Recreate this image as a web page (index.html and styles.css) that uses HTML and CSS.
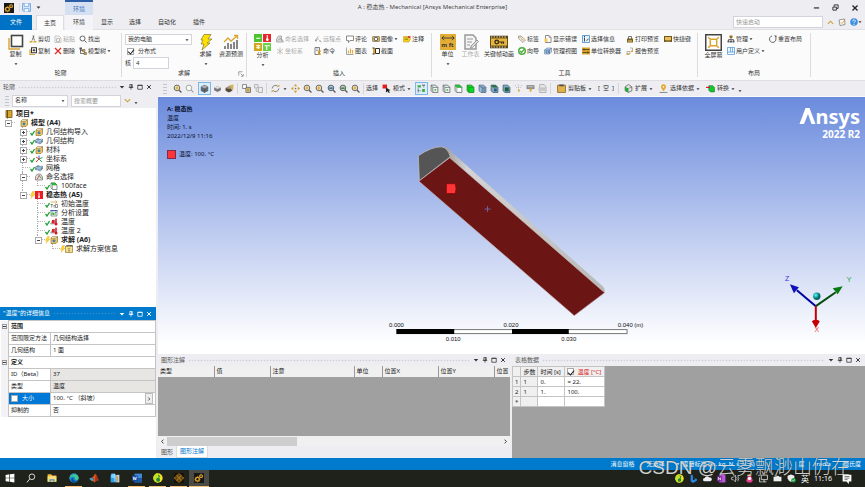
FILE: index.html
```html
<!DOCTYPE html>
<html lang="zh-CN">
<head>
<meta charset="utf-8">
<title>A : 稳态热 - Mechanical</title>
<link rel="stylesheet" href="styles.css">
</head>
<body>
<svg class="defs" aria-hidden="true">
  <symbol id="gears" viewBox="0 0 16 16"><rect width="16" height="16" fill="#171717"/><circle cx="5.5" cy="10" r="3" fill="none" stroke="#e9a72a" stroke-width="2"/><circle cx="11.3" cy="5" r="2.2" fill="none" stroke="#e9a72a" stroke-width="1.8"/><path d="M5.500 5v10M.5 10h10M2 6.500l7 7M2 13.500l7-7M11.300 1v8M7.500 5h8" stroke="#e9a72a" stroke-width="1" stroke-dasharray="1.500 7 1.500"/></symbol>
  <symbol id="save" viewBox="0 0 16 16"><path d="M1 1h14v14H3l-2-2z" fill="#d5e6fa" stroke="#6ba2e6" stroke-width="1.600"/><path d="M4 1v5h8V1M4 15v-5h8v5" fill="#fff" stroke="#6ba2e6" stroke-width="1.400"/></symbol>
  <symbol id="copybig" viewBox="0 0 16 16"><path d="M1 4v11h11" fill="none" stroke="#d9a432" stroke-width="1.400"/><rect x="3.500" y="1.500" width="11" height="11" fill="#fff" stroke="#444" stroke-width="1.600"/></symbol>
  <symbol id="cut" viewBox="0 0 16 16"><path d="M8 1l3 10M10 1L6 11" stroke="#555" stroke-width="1.500"/><path d="M1 12h6v3H1zM9 12h6v3H9z" fill="#d9a432"/></symbol>
  <symbol id="copy" viewBox="0 0 16 16"><path d="M2 5v10h10" fill="none" stroke="#d9a432" stroke-width="2.500"/><rect x="5" y="1.500" width="10" height="10" fill="#fff" stroke="#333" stroke-width="2"/><path d="M7 6.500h6M10 4v5" stroke="#333" stroke-width="2"/></symbol>
  <symbol id="paste" viewBox="0 0 16 16"><path d="M2 2h8l4 4v9H2z" fill="#f7f7f7" stroke="#bbb" stroke-width="1.500"/><path d="M5 7h6v6H5z" fill="none" stroke="#aaa" stroke-width="1.500"/></symbol>
  <symbol id="del" viewBox="0 0 16 16"><path d="M2 2l12 12M14 2L2 14" stroke="#e02b2b" stroke-width="2.500"/></symbol>
  <symbol id="find" viewBox="0 0 16 16"><circle cx="7" cy="7" r="5" fill="none" stroke="#555" stroke-width="1.800"/><path d="M11 11l4 4" stroke="#555" stroke-width="2"/></symbol>
  <symbol id="treeico" viewBox="0 0 16 16"><path d="M3 3v10h8M3 7h5" fill="none" stroke="#444" stroke-width="1.500"/><path d="M1 1h5v4H1z" fill="#555"/><path d="M7 5h5v4H7zM10 11h5v4h-5z" fill="#d9a432" stroke="#444"/></symbol>
  <symbol id="bolt" viewBox="0 0 16 16"><path d="M6 .5h7L10 5h4l-5 4h3l-8 7 2-6H3l2-4H3z" fill="#ffe000" stroke="#8f8630" stroke-width=".8"/></symbol>
  <symbol id="forecast" viewBox="0 0 16 16"><path d="M2 15v-3M5 15V9M8 15v-5M11 15V8M14 15V6" stroke="#555" stroke-width="1.400"/><path d="M1 8l4-4 3 3 6-5M11 1.500h3.500V5" fill="none" stroke="#d9a432" stroke-width="1.300"/></symbol>
  <symbol id="analysis" viewBox="0 0 16 16"><path d="M0 0h7.500v7.500H0z" fill="#4cc431"/><path d="M8.500 0H16v7.500H8.500z" fill="#e9232b"/><path d="M0 8.500h7.500V16H0z" fill="#d2a417"/><path d="M8.500 8.500H16V16H8.500z" fill="#6ad043"/><path d="M2 4h4M4 10v4M2 13h4M2 11h4M10 11h5M12 11v4M12.500 1v4" stroke="#fff" stroke-width="1"/><circle cx="12.500" cy="5.300" r="1.300" fill="#fff"/></symbol>
  <symbol id="named" viewBox="0 0 16 16"><path d="M1 14V8l4-6h6v5l4 7z" fill="#ddd" stroke="#999" stroke-width="1.500"/><path d="M4 11l5-5 3 6" fill="none" stroke="#888" stroke-width="1.500"/></symbol>
  <symbol id="axesgray" viewBox="0 0 16 16"><path d="M8 1v14M2 4l12 9M14 4L2 13" stroke="#b5b5b5" stroke-width="1.600"/></symbol>
  <symbol id="remote" viewBox="0 0 16 16"><path d="M2 12L9 2M4 8h6M11 11l4 4" stroke="#aaa" stroke-width="1.600"/><circle cx="4" cy="11" r="2" fill="#999"/><circle cx="12" cy="12" r="1.500" fill="#999"/></symbol>
  <symbol id="cmd" viewBox="0 0 16 16"><path d="M2 1h9v14H2z" fill="#fff" stroke="#555" stroke-width="1.500"/><path d="M4 4h5M4 7h4" stroke="#555"/><path d="M14 8H9v6h5" fill="none" stroke="#d9a432" stroke-width="2.500"/></symbol>
  <symbol id="comment" viewBox="0 0 16 16"><path d="M1 2h14v9H8l-3 4v-4H1z" fill="#fff" stroke="#666" stroke-width="1.500"/></symbol>
  <symbol id="chart" viewBox="0 0 16 16"><path d="M1 1v14h14" fill="none" stroke="#888" stroke-width="1.500"/><path d="M5 13V7M9 13V3M13 13V6" stroke="#e0ae3d" stroke-width="2.200"/></symbol>
  <symbol id="camera" viewBox="0 0 16 16"><rect x="1" y="3" width="14" height="10" rx="1" fill="#dab65b" stroke="#555"/><circle cx="8" cy="8" r="3.500" fill="#fff" stroke="#444" stroke-width="1.600"/></symbol>
  <symbol id="section" viewBox="0 0 16 16"><path d="M2 2h5v12H2z" fill="#d9a432"/><path d="M7 3h8v10H7z" fill="#fff" stroke="#333" stroke-width="2"/><path d="M1 2h4M1 14h4" stroke="#333" stroke-width="2"/></symbol>
  <symbol id="note" viewBox="0 0 16 16"><path d="M1 3h11l3 5-3 6H1z" fill="#f4cf1d" stroke="#b68e15"/><path d="M3 6h7M3 9h7" stroke="#8a6a10" stroke-width="1.200"/><path d="M10 2h5v4h-5z" fill="#d44"/></symbol>
  <symbol id="sheet" viewBox="0 0 16 16"><path d="M2 1h8l3 3v11H2z" fill="#f5f5f5" stroke="#999" stroke-width="1.500"/><path d="M4 5h6M4 8h5M4 11h3" stroke="#999"/><path d="M8 12l6-6 1.500 1.500-6 6-2 .5z" fill="#ddd" stroke="#888" stroke-width=".8"/></symbol>
  <symbol id="film" viewBox="0 0 20 14"><path d="M0 0h20v14H0z" fill="#55451a"/><path d="M1 3h18v8H1z" fill="#e7b440"/><path d="M1 1.500h18M1 12.500h18" stroke="#f8e3ad" stroke-width="1.200" stroke-dasharray="1.500 1.500"/><circle cx="7.500" cy="7" r="2" fill="none" stroke="#3c3111" stroke-width="1.500"/><path d="M9.500 7H15v2M13 7v2" fill="none" stroke="#3c3111" stroke-width="1.300"/></symbol>
  <symbol id="tag" viewBox="0 0 16 16"><path d="M1 2h5l9 8-5 5L1 7z" fill="#eee" stroke="#777" stroke-width="1.200"/><circle cx="4" cy="4.500" r="1.500" fill="#d9a432"/><path d="M6 7l5 4" stroke="#d9a432" stroke-width="2"/></symbol>
  <symbol id="ok" viewBox="0 0 16 16"><circle cx="8" cy="8" r="6.500" fill="#fff" stroke="#48ad3c" stroke-width="3"/><path d="M4 8l3 3 5-6" fill="none" stroke="#48ad3c" stroke-width="2.400"/></symbol>
  <symbol id="doc" viewBox="0 0 16 16"><path d="M3 1h7l4 4v10H3z" fill="#fff" stroke="#666" stroke-width="1.500"/><path d="M1 7h6v7H1z" fill="#f4ca5c"/><path d="M10 1v4h4" fill="none" stroke="#666"/></symbol>
  <symbol id="views" viewBox="0 0 16 16"><path d="M1 6l5-4h9v8l-4 4H1z" fill="#b8d2ed" stroke="#49739d"/><path d="M1 6h10v8M11 6l4-4M4 8h5v4H4z" fill="none" stroke="#355d85" stroke-width="1.200"/></symbol>
  <symbol id="info" viewBox="0 0 16 16"><path d="M1 1h14v14H1z" fill="#e5f2fd" stroke="#3684c6" stroke-width="1.500"/><path d="M5 5v8M5 2v2M9 11l4-3" stroke="#333" stroke-width="1.800"/></symbol>
  <symbol id="conv" viewBox="0 0 16 16"><path d="M0 1h16v14H0z" fill="#d9a432"/><path d="M1 5h14M1 11h14M4 3v4M12 9v4" stroke="#493b16" stroke-width="1.600"/></symbol>
  <symbol id="lock" viewBox="0 0 16 16"><path d="M5 8V3h6v5" fill="none" stroke="#555" stroke-width="1.600"/><path d="M2 7h12v8H2z" fill="#79601f"/><path d="M4 11h8v2H4z" fill="#f1d079"/></symbol>
  <symbol id="report" viewBox="0 0 16 16"><path d="M2 14V9h6v5zM8 2h5v6" fill="none" stroke="#999" stroke-width="1.500"/><path d="M1 13h5v3H1zM10 7h4v3h-4z" fill="#d9a432"/></symbol>
  <symbol id="keys" viewBox="0 0 16 16"><path d="M0 2h16v12H0z" fill="#6b5520"/><path d="M2 4h12v6H2z" fill="#e8bf5c"/><path d="M3 12h10" stroke="#e8bf5c" stroke-width="1.500"/></symbol>
  <symbol id="full" viewBox="0 0 16 16"><path d="M.7.700h14.600v14.600H.7z" fill="#fff" stroke="#444" stroke-width="1.400"/><path d="M5 5h6v6H5zM3 3l2.500 2.500M13 3l-2.500 2.500M3 13l2.500-2.500M13 13l-2.500-2.500" fill="none" stroke="#dba22d" stroke-width="1.400"/></symbol>
  <symbol id="manage" viewBox="0 0 16 16"><path d="M8 5v4M3 12V9h10v3" fill="none" stroke="#555" stroke-width="1.600"/><path d="M5 1h6v5H5z" fill="#947122"/><path d="M1 11h4v4H1zM6 11h4v4H6zM11 11h4v4h-4z" fill="#555"/></symbol>
  <symbol id="userdef" viewBox="0 0 16 16"><path d="M1 1h14v14H1zM7 1v9M1 10h14M11 1v9" fill="#eff7ff" stroke="#4793d8" stroke-width="1.400"/></symbol>
  <symbol id="reset" viewBox="0 0 16 16"><path d="M6 2a6.500 6.500 0 1 0 7 3" fill="none" stroke="#555" stroke-width="1.800"/><path d="M10 1h5v5z" fill="#555"/></symbol>
  <symbol id="launch" viewBox="0 0 16 16"><path d="M2 12V2h10M7 7l6 6M14 8v6H8" fill="none" stroke="#777" stroke-width="1.800"/></symbol>
  <symbol id="caret" viewBox="0 0 16 16"><path d="M2 5h12l-6 7z" fill="currentColor"/></symbol>
  <symbol id="arrow" viewBox="0 0 16 16"><path d="M5 2l6 6-6 6" fill="none" stroke="currentColor" stroke-width="3"/></symbol>
  <symbol id="pin" viewBox="0 0 16 16"><path d="M5 1h6v8H5zM2 9h12M8 9v6" fill="none" stroke="currentColor" stroke-width="2"/><path d="M9 1h2v8H9z" fill="currentColor"/></symbol>
  <symbol id="max" viewBox="0 0 16 16"><path d="M2 3h12v11H2zM2 4h12" fill="none" stroke="currentColor" stroke-width="2"/></symbol>
  <symbol id="close" viewBox="0 0 16 16"><path d="M3 3l10 10M13 3L3 13" stroke="currentColor" stroke-width="2.600"/></symbol>
  <symbol id="min" viewBox="0 0 16 16"><path d="M2 9h12" stroke="currentColor" stroke-width="2.600"/></symbol>
  <symbol id="restore" viewBox="0 0 16 16"><path d="M2 7h8v7H2zM5 6V2h9v8h-3" fill="none" stroke="currentColor" stroke-width="2"/></symbol>
  <symbol id="chev" viewBox="0 0 16 16"><path d="M2 5l6 6 6-6" fill="none" stroke="#cf9d35" stroke-width="2.600"/></symbol>
  <symbol id="chevup" viewBox="0 0 16 16"><path d="M2 11l6-6 6 6" fill="none" stroke="#cf9d35" stroke-width="2.400"/></symbol>
  <symbol id="edit" viewBox="0 0 16 16"><path d="M2 4l11-2 1 11-10 2z" fill="#fff" stroke="#777" stroke-width="1.500"/><path d="M5 8l3 3 6-8" fill="none" stroke="#d9a432" stroke-width="1.800"/></symbol>
  <symbol id="help" viewBox="0 0 16 16"><circle cx="8" cy="8" r="7.500" fill="#3e8ee0"/><path d="M5.500 6.500a2.500 2.500 0 1 1 3.500 2q-1 .5-1 2M8 12v1.800" fill="none" stroke="#fff" stroke-width="1.800"/></symbol>
  <symbol id="zoomin" viewBox="0 0 16 16"><circle cx="7" cy="7" r="5" fill="#fff6d6" stroke="#565656" stroke-width="1.600"/><path d="M11 11l4 4" stroke="#565656" stroke-width="2.200"/><path d="M4 7h6M7 4v6" stroke="#d49a1d" stroke-width="1.800"/></symbol>
  <symbol id="zoomout" viewBox="0 0 16 16"><circle cx="7" cy="7" r="5" fill="#fafafa" stroke="#999" stroke-width="1.500"/><path d="M11 11l4 4" stroke="#999" stroke-width="2"/></symbol>
  <symbol id="zoomblue" viewBox="0 0 16 16"><circle cx="7" cy="7" r="5" fill="#a7c9e9" stroke="#565656" stroke-width="1.600"/><path d="M11 11l4 4" stroke="#565656" stroke-width="2.200"/><path d="M4 6h6v3H4z" fill="#4a7297"/></symbol>
  <symbol id="zoomgreen" viewBox="0 0 16 16"><circle cx="7" cy="7" r="5" fill="#bfd7c0" stroke="#565656" stroke-width="1.600"/><path d="M11 11l4 4" stroke="#565656" stroke-width="2.200"/><path d="M4 6h6v3H4z" fill="#3f8847"/></symbol>
  <symbol id="cube" viewBox="0 0 16 16"><path d="M2 5l6-3 6 3v7l-6 3-6-3z" fill="#5f6a70" stroke="#4e555a"/><path d="M2 5l6 3 6-3-6-3z" fill="#a4acb0"/><path d="M8 8v7" stroke="#3e4a51"/></symbol>
  <symbol id="cubeflat" viewBox="0 0 16 16"><path d="M2 6l6-2 6 2v5l-6 3-6-3z" fill="#777"/><path d="M2 6l6-2 6 2-6 3z" fill="#ddd"/></symbol>
  <symbol id="cubes" viewBox="0 0 16 16"><path d="M1 7l6-3 6 3v5l-6 3-6-3z" fill="#55493a"/><path d="M7 2l8-1v8l-4 1z" fill="#d9b45a"/><path d="M1 7l6 2 6-2-6-3z" fill="#a79a80"/></symbol>
  <symbol id="clip2" viewBox="0 0 16 16"><path d="M1 1h7v7H1z" fill="#fff" stroke="#777" stroke-width="1.500"/><path d="M7 6h8v9H7z" fill="#f4d377" stroke="#666" stroke-width="1.500"/><path d="M9 9h4M9 12h4" stroke="#444"/></symbol>
  <symbol id="clipgray" viewBox="0 0 16 16"><path d="M1 1h6v6H1zM8 6h7v9H8zM4 8v5h3" fill="#eee" stroke="#aaa" stroke-width="1.500"/></symbol>
  <symbol id="rotate" viewBox="0 0 16 16"><path d="M2 8a6 6 0 0 1 10-4M14 8a6 6 0 0 1-10 4" fill="none" stroke="#777" stroke-width="1.600"/><path d="M10 5h5V1zM6 11H1v4z" fill="#d9a432"/></symbol>
  <symbol id="pan" viewBox="0 0 16 16"><path d="M8 0l3 4H5zM8 16l3-4H5zM0 8l4-3v6zM16 8l-4-3v6z" fill="#d99c20"/><circle cx="8" cy="8" r="1.500" fill="#777"/></symbol>
  <symbol id="mode" viewBox="0 0 16 16"><path d="M1 1h8v7H1z" fill="#e51c1c"/><path d="M7 6l8 5-3 1 2 3-2 1-2-3-3 2z" fill="#222"/></symbol>
  <symbol id="selmode" viewBox="0 0 16 16"><path d="M1 2h6v4H1zM9 9h5v5H9z" fill="#44ad48"/><path d="M2 8v7M9 2h6M2 12h4M12 2v4" stroke="#333" stroke-width="1.500" stroke-dasharray="2 1"/></symbol>
  <symbol id="wire" viewBox="0 0 16 16"><path d="M2 2h8l4 4v9H5L2 12z" fill="#f3f6f3" stroke="#566" stroke-width="1.400"/><path d="M5 6h9M5 6v9M2 2l3 4" stroke="#566" stroke-width="1.300"/><path d="M8 9h3v3H8z" fill="#52b252"/></symbol>
  <symbol id="wiretop" viewBox="0 0 16 16"><path d="M2 2h8l4 4v9H5L2 12z" fill="#fff" stroke="#566" stroke-width="1.400"/><path d="M2 2h8l4 4H5z" fill="#16cf29" stroke="#258c30"/><path d="M5 6v9" stroke="#566"/></symbol>
  <symbol id="solid" viewBox="0 0 16 16"><path d="M2 2h8l4 4v9H5L2 12z" fill="#08dc20" stroke="#13801d" stroke-width="1.400"/><path d="M5 6h9M5 6v9M2 2l3 4" stroke="#13801d"/></symbol>
  <symbol id="bluebox" viewBox="0 0 16 16"><path d="M2 2h8l4 4v9H5L2 12z" fill="#a2c1dc" stroke="#456684" stroke-width="1.400"/><path d="M7 8h5v5H7zM2 2l3 4h9" fill="#7c9ebc" stroke="#456684"/></symbol>
  <symbol id="greenblue" viewBox="0 0 16 16"><path d="M2 2h8l4 4v9H5L2 12z" fill="#83aac9" stroke="#365873" stroke-width="1.400"/><path d="M2 2h8l4 4H5z" fill="#266e36"/><path d="M7 8h5v5H7z" fill="#355b77"/></symbol>
  <symbol id="elem" viewBox="0 0 16 16"><path d="M2 2h8l4 4v9H5L2 12z" fill="#83aac9" stroke="#365873" stroke-width="1.400"/><path d="M5 6h7v7H5z" fill="#1d5e35"/></symbol>
  <symbol id="cursors" viewBox="0 0 16 16"><path d="M2 2l4 6M8 1v7M14 2l-4 6" stroke="#aaa" stroke-width="1.500" stroke-dasharray="2"/><path d="M7 8l4 3-3 4z" fill="#d9a432"/></symbol>
  <symbol id="label" viewBox="0 0 16 16"><path d="M1 2h14v7H1z" fill="#888"/><path d="M3 5h10" stroke="#ddd" stroke-width="1.500"/><path d="M6 8h5l-1 4-3 3z" fill="#d9ae4c"/></symbol>
  <symbol id="printgray" viewBox="0 0 16 16"><path d="M3 1h8l3 3v11H3z" fill="#e8e8e8" stroke="#aaa" stroke-width="1.500"/><path d="M1 6h14v6H1z" fill="#c6c6c6"/></symbol>
  <symbol id="clipboard" viewBox="0 0 16 16"><path d="M1 2h14v13H1z" fill="#e2b24a" stroke="#8a6c26" stroke-width="1.500"/><path d="M4 1h8v3H4z" fill="#4d4d4d"/></symbol>
  <symbol id="extend" viewBox="0 0 16 16"><path d="M2 5l6-4 6 4v7l-6 3-6-3z" fill="#e5e5e5" stroke="#555" stroke-width="1.300"/><path d="M2 5l6 3v7l-6-3z" fill="#25a938"/><path d="M8 8l6-3" stroke="#555"/></symbol>
  <symbol id="pinloc" viewBox="0 0 16 16"><path d="M8 13L4 7a4.500 4.500 0 1 1 8 0z" fill="#e1a82c"/><circle cx="8" cy="5" r="1.500" fill="#fff"/><path d="M1 15h14" stroke="#777" stroke-width="1.500"/></symbol>
  <symbol id="convert" viewBox="0 0 16 16"><path d="M5 3h7l3 3v8H8l-3-3z" fill="#10c92b" stroke="#186822"/><path d="M0 6h7" stroke="#e03" stroke-width="2"/></symbol>
  <symbol id="project" viewBox="0 0 16 16"><path d="M2 1h12v14H2z" fill="#d6a630" stroke="#6b4c12" stroke-width="1.500"/><path d="M5 1v14" stroke="#6b4c12" stroke-width="2"/></symbol>
  <symbol id="model" viewBox="0 0 16 16"><path d="M2 4h10l3-3v11l-3 3H2z" fill="#efc65f" stroke="#886c2b" stroke-width="1.300"/><path d="M2 4l3-3h10" fill="#fae7b4" stroke="#886c2b"/><circle cx="8" cy="9.500" r="3" fill="#477fae"/></symbol>
  <symbol id="geom" viewBox="0 0 16 16"><path d="M1 6l5-3 4 2 5-1v6l-5 4-4-2-5-1z" fill="#7496b6" stroke="#3c5a78"/><path d="M1 6l5 2 4-1 5-3M6 8v4M10 7v6" stroke="#d0e0ee" fill="none" stroke-width="1.300"/></symbol>
  <symbol id="axes" viewBox="0 0 16 16"><path d="M8 8V1" stroke="#2b62d9" stroke-width="2"/><path d="M8 8l6 6M8 8l7-3" stroke="#27a545" stroke-width="2"/><path d="M8 8l-6 6M8 8L2 4" stroke="#e73336" stroke-width="2"/></symbol>
  <symbol id="namedtree" viewBox="0 0 16 16"><path d="M1 14V7l4-5h6l4 6v6z" fill="#dfdfdf" stroke="#666" stroke-width="1.300"/><path d="M4 13L9 4" stroke="#d33" stroke-width="1.600"/><path d="M8 5l5 6" stroke="#2ca03a" stroke-width="1.800"/></symbol>
  <symbol id="steady" viewBox="0 0 16 16"><path d="M0 0h16v16H0z" fill="#ec1c24"/><path d="M8 3v8" stroke="#fff" stroke-width="2"/><circle cx="8" cy="12" r="2" fill="#fff"/></symbol>
  <symbol id="init" viewBox="0 0 16 16"><path d="M1 4h13M11 1l3 3-3 3" fill="none" stroke="#d39d36" stroke-width="1.500"/><path d="M1 9h5M3.500 9v6M7 11h3M7 14h3M11 9h4v6h-4z" fill="none" stroke="#555" stroke-width="1.300"/></symbol>
  <symbol id="settings" viewBox="0 0 16 16"><path d="M2 3h12v11H2z" fill="#eef6ee" stroke="#5d6a61" stroke-width="1.300"/><path d="M1 3h14" stroke="#2d3fb8" stroke-width="2.500" stroke-dasharray="2 1"/><path d="M4 12V8h3v4M10 12V7h3" fill="none" stroke="#36a04a" stroke-width="1.800"/></symbol>
  <symbol id="temp" viewBox="0 0 16 16"><path d="M1 12l5-8 5 2-3 6z" fill="#c7ced4" stroke="#617080"/><path d="M4 4h5v7H4z" fill="#dc2027"/><path d="M12 1v10" stroke="#d31720" stroke-width="3"/><circle cx="12" cy="12" r="3" fill="#d31720"/></symbol>
  <symbol id="solinfo" viewBox="0 0 16 16"><path d="M1 3h14v12H1z" fill="#f7df8c" stroke="#8b7431" stroke-width="1.300"/><path d="M1 3l3-2h11v2M8 6v2M8 9v4" fill="none" stroke="#555" stroke-width="1.800"/></symbol>
  <symbol id="tick" viewBox="0 0 10 16"><path d="M1 10l3 4 5-8" fill="none" stroke="#22a334" stroke-width="2.600"/></symbol>
  <symbol id="tbolt" viewBox="0 0 10 16"><path d="M5 1h4L7 6h3l-8 9 2-6H1z" fill="#ffd52c" stroke="#cf9817" stroke-width=".6"/></symbol>
  <symbol id="win" viewBox="0 0 16 16"><path d="M1 3l6-1v5.500H1zM8 2l7-1v6.500H8zM1 8.500h6V14l-6-1zM8 8.500h7V15l-7-1z" fill="#fff"/></symbol>
  <symbol id="tsearch" viewBox="0 0 16 16"><circle cx="9.500" cy="6" r="4.500" fill="none" stroke="#eee" stroke-width="1.400"/><path d="M6 9.500L1.500 15" stroke="#eee" stroke-width="1.500"/></symbol>
  <symbol id="folder" viewBox="0 0 16 16"><path d="M1 2h6l1 2h7v10H1z" fill="#f0b93a"/><path d="M1 5h14v9H1z" fill="#fbdc79"/><path d="M4 14v-4h8v4h-2v-2H6v2z" fill="#3f91d4"/></symbol>
  <symbol id="edge" viewBox="0 0 16 16"><circle cx="8" cy="8" r="7.500" fill="#1887d4"/><path d="M1 7a7.500 7.500 0 0 1 14.500 1c0 3-4 4-6 2 1-3-2-5-5-4Q2 6 1 9z" fill="#40c78b"/><path d="M7 8c-1 3 2 6 6 4-2 4-7 4-9 1-1-3 0-5 3-5z" fill="#0d4f96"/></symbol>
  <symbol id="matlab" viewBox="0 0 16 16"><path d="M0 9l5-2 3 4-3 2z" fill="#4f9dc6"/><path d="M5 7c2-1 4-6 5-6 2 0 4 9 6 11-3-1-5 1-7 3-1-2-2-2-4-2l3-3z" fill="#dc5c22"/><path d="M10 1c1 3 0 8-1 14 2-2 4-4 7-3-2-2-4-11-6-11z" fill="#a7301a"/></symbol>
  <symbol id="store" viewBox="0 0 16 16"><path d="M1 3h9v12H1z" fill="#30a1e8"/><path d="M2 1h6v7H2z" fill="#74d0ff"/><path d="M10 3h5v12h-5z" fill="#c7d3dd"/><path d="M8 2v12" stroke="#fff"/><path d="M12 5v8" stroke="#d9a432" stroke-width="2"/></symbol>
  <symbol id="word" viewBox="0 0 16 16"><path d="M4 1h12v14H4z" fill="#3e8ad7"/><path d="M4 8h12v7H4z" fill="#1e56ac"/><path d="M0 4h9v9H0z" fill="#164995"/><path d="M2 6l1 5 1.500-4L6 11l1-5" fill="none" stroke="#fff" stroke-width="1.200"/></symbol>
  <symbol id="music" viewBox="0 0 16 16"><circle cx="8" cy="8" r="7.500" fill="#f7df22"/><path d="M8 .5a7.500 7.500 0 0 0 0 15z" fill="#c6df28"/><path d="M8 2l4 3-2 1 1 4a3 3 0 1 1-2-2z" fill="#178a3d"/></symbol>
  <symbol id="wb" viewBox="0 0 16 16"><path d="M0 0h16v16H0z" fill="#171309"/><path d="M8 1l4 3-4 3-4-3zM4 5l4 3-4 3-4-3zM12 5l4 3-4 3-4-3zM8 9l4 3-4 3-4-3z" fill="#5b400f" stroke="#e2a02a" stroke-width=".8"/></symbol>
  <symbol id="bing" viewBox="0 0 16 16"><path d="M3 1l4 1v9l5-2-4-3 6 3v3l-7 4-4-3z" fill="#2788e8"/></symbol>
  <symbol id="cloud" viewBox="0 0 16 16"><path d="M3 13a3 3 0 0 1 0-6 4.500 4.500 0 0 1 8-1 3.500 3.500 0 0 1 2 7z" fill="#eee"/></symbol>
  <symbol id="onenote" viewBox="0 0 16 16"><path d="M4 1h11v14H4z" fill="#bd55dd"/><path d="M0 4h9v9H0z" fill="#74248e"/><path d="M2.500 11V6l4 5V6" fill="none" stroke="#fff" stroke-width="1.300"/></symbol>
  <symbol id="sound" viewBox="0 0 16 16"><path d="M1 6h3l4-4v12l-4-4H1zM10 5q2 3 0 6M12 3q4 5 0 10" fill="none" stroke="#ccc" stroke-width="1.300"/></symbol>
  <symbol id="qq" viewBox="0 0 16 16"><path d="M2 12l2-6a4 4 0 0 1 8 0l2 6-3 3H5z" fill="#e83b88"/><circle cx="8" cy="8" r="3" fill="#fff"/><path d="M4 3l4-3 4 3z" fill="#ffcf27"/></symbol>
  <symbol id="net" viewBox="0 0 16 16"><path d="M4 2h11v8H4zM9 10v4M6 14h7M1 6v8h4" fill="none" stroke="#ddd" stroke-width="1.500"/></symbol>
  <symbol id="drive" viewBox="0 0 16 16"><path d="M1 5h14v8H1z" fill="#eee"/><path d="M3 3l8 2" stroke="#eee" stroke-width="2"/></symbol>
  <symbol id="shield" viewBox="0 0 16 16"><path d="M1 3l6-2 6 2v5q-1 4-6 6-5-2-6-6z" fill="#eee"/><circle cx="11.500" cy="11" r="4" fill="#1fa84a"/><path d="M9.500 11l1.500 1.500 2.500-3" fill="none" stroke="#fff"/></symbol>
  <symbol id="notif" viewBox="0 0 16 16"><path d="M1 1h14v11h-4v4l-4-4H1z" fill="#fff"/><path d="M4 4h8M4 6.500h8M4 9h5" stroke="#333"/></symbol>
</svg>

<header class="titlebar">
  <div class="quick">
    <svg class="i10"><use href="#gears"/></svg>
    <button class="flat" aria-label="保存"><svg class="i9"><use href="#save"/></svg></button>
    <button class="flat" aria-label="更多"><svg class="i5"><use href="#caret"/></svg></button>
  </div>
  <div class="context">环境</div>
  <h1>A : 稳态热 - Mechanical [Ansys Mechanical Enterprise]</h1>
  <div class="winbtns">
    <button class="flat" aria-label="最小化"><svg class="i7"><use href="#min"/></svg></button>
    <button class="flat" aria-label="还原"><svg class="i7"><use href="#restore"/></svg></button>
    <button class="flat" aria-label="关闭"><svg class="i8"><use href="#close"/></svg></button>
  </div>
</header>

<nav class="tabs">
  <button class="tab file">文件</button>
  <button class="tab current">主页</button>
  <button class="tab ctx">环境</button>
  <button class="tab">显示</button>
  <button class="tab">选择</button>
  <button class="tab wide">自动化</button>
  <button class="tab">插件</button>
  <div class="launchbox">
    <input type="text" placeholder="快速启动" aria-label="快速启动">
    <svg class="i7"><use href="#chevup"/></svg>
    <svg class="i8"><use href="#edit"/></svg>
    <span class="helpbtn"><svg class="i8"><use href="#help"/></svg><svg class="i4"><use href="#caret"/></svg></span>
  </div>
</nav>

<section class="ribbon">
  <div class="group g-outline">
    <div class="tools">
      <button class="big"><svg class="i16"><use href="#copybig"/></svg>复制<svg class="i4"><use href="#caret"/></svg></button>
      <div class="cmds">
        <button><svg><use href="#cut"/></svg>剪切</button><button><svg><use href="#copy"/></svg>复制</button>
      </div>
      <div class="cmds">
        <button class="off"><svg><use href="#paste"/></svg>粘贴</button><button><svg><use href="#del"/></svg>删除</button>
      </div>
      <div class="cmds">
        <button><svg><use href="#find"/></svg>找出</button><button><svg><use href="#treeico"/></svg>模型树<svg class="i4"><use href="#caret"/></svg></button>
      </div>
    </div>
    <h2>轮廓</h2>
  </div>
  <div class="group g-solve">
    <div class="tools">
      <div class="form">
        <span class="selwrap"><select aria-label="求解位置"><option>我的电脑</option></select><svg class="i4"><use href="#caret"/></svg></span>
        <label class="chk"><input type="checkbox" checked>分布式</label>
        <label class="cores">核<input type="text" value="4"></label>
      </div>
      <button class="big"><svg class="i16"><use href="#bolt"/></svg>求解<svg class="i4"><use href="#caret"/></svg></button>
      <button class="big"><svg class="i16"><use href="#forecast"/></svg>资源预测</button>
    </div>
    <h2>求解</h2>
    <svg class="launcher"><use href="#launch"/></svg>
  </div>
  <div class="group g-insert">
    <div class="tools">
      <button class="big"><svg class="i17"><use href="#analysis"/></svg>分析<svg class="i4"><use href="#caret"/></svg></button>
      <div class="cmds">
        <button class="off"><svg><use href="#named"/></svg>命名选择</button><button class="off"><svg><use href="#axesgray"/></svg>坐标系</button>
      </div>
      <div class="cmds">
        <button class="off"><svg><use href="#remote"/></svg>远程点</button><button><svg><use href="#cmd"/></svg>命令</button>
      </div>
      <div class="cmds">
        <button><svg><use href="#comment"/></svg>评论</button><button><svg><use href="#chart"/></svg>图表</button>
      </div>
      <div class="cmds">
        <button><svg><use href="#camera"/></svg>图像<svg class="i4"><use href="#caret"/></svg></button><button><svg><use href="#section"/></svg>截面</button>
      </div>
      <div class="cmds">
        <button><svg><use href="#note"/></svg>注释</button>
      </div>
    </div>
    <h2>插入</h2>
  </div>
  <div class="group g-tools">
    <div class="tools">
      <button class="big"><span class="units"><svg viewBox="0 0 16 6"><path d="M1 3h14M3.500 .5L1 3l2.500 2.500M12.500 .5L15 3l-2.500 2.500" fill="none" stroke="#333" stroke-width="1"/></svg><b>m ft</b></span>单位<svg class="i4"><use href="#caret"/></svg></button>
      <button class="big off"><svg class="i16"><use href="#sheet"/></svg>工作表</button>
      <button class="big"><svg class="film"><use href="#film"/></svg>关键帧动画</button>
      <div class="cmds">
        <button><svg><use href="#tag"/></svg>标签</button><button><svg><use href="#ok"/></svg>向导</button>
      </div>
      <div class="cmds">
        <button><svg><use href="#doc"/></svg>显示错误</button><button><svg><use href="#views"/></svg>管理视图</button>
      </div>
      <div class="cmds">
        <button><svg><use href="#info"/></svg>选择信息</button><button><svg><use href="#conv"/></svg>单位转换器</button>
      </div>
      <div class="cmds">
        <button><svg><use href="#lock"/></svg>打印预览</button><button><svg><use href="#report"/></svg>报告预览</button>
      </div>
      <div class="cmds">
        <button><svg><use href="#keys"/></svg>快捷键</button>
      </div>
    </div>
    <h2>工具</h2>
  </div>
  <div class="group g-layout">
    <div class="tools">
      <button class="big"><svg class="i17"><use href="#full"/></svg>全屏幕</button>
      <div class="cmds">
        <button><svg><use href="#manage"/></svg>管理<svg class="i4"><use href="#caret"/></svg></button><button><svg><use href="#userdef"/></svg>用户定义<svg class="i4"><use href="#caret"/></svg></button>
      </div>
      <div class="cmds">
        <button><svg><use href="#reset"/></svg>重置布局</button>
      </div>
    </div>
    <h2>布局</h2>
  </div>
</section>

<main class="work">
  <aside class="side">
    <section class="outline">
      <header class="phead"><h3>轮廓</h3><i class="dots"></i><svg><use href="#caret"/></svg><svg><use href="#pin"/></svg><svg><use href="#max"/></svg><svg><use href="#close"/></svg></header>
      <div class="filter">
        <i class="grip"></i>
        <span class="selwrap"><select aria-label="筛选方式"><option>名称</option></select><svg class="i4"><use href="#caret"/></svg></span>
        <input type="text" placeholder="搜索概要" aria-label="搜索概要">
        <svg class="i7"><use href="#chev"/></svg><svg class="i4 low"><use href="#caret"/></svg>
      </div>
      <div class="tree">
        <div class="row root"><svg><use href="#project"/></svg><b>项目*</b></div>
        <ul>
          <li><div class="row"><i class="tg minus"></i><i class="st"></i><svg><use href="#model"/></svg><b>模型 (A4)</b></div>
            <ul>
              <li><div class="row"><i class="tg plus"></i><svg class="st"><use href="#tick"/></svg><svg><use href="#model"/></svg>几何结构导入</div></li>
              <li><div class="row"><i class="tg plus"></i><svg class="st"><use href="#tick"/></svg><svg><use href="#geom"/></svg>几何结构</div></li>
              <li><div class="row"><i class="tg plus"></i><svg class="st"><use href="#tick"/></svg><svg><use href="#model"/></svg>材料</div></li>
              <li><div class="row"><i class="tg plus"></i><svg class="st"><use href="#tick"/></svg><svg><use href="#axes"/></svg>坐标系</div></li>
              <li><div class="row"><i class="tg"></i><svg class="st"><use href="#tick"/></svg><svg><use href="#geom"/></svg>网格</div></li>
              <li><div class="row"><i class="tg minus"></i><i class="st"></i><svg><use href="#namedtree"/></svg>命名选择</div>
                <ul><li><div class="row"><i class="tg"></i><svg class="st"><use href="#tick"/></svg><svg><use href="#wiretop"/></svg>100face</div></li></ul>
              </li>
              <li><div class="row"><i class="tg minus"></i><svg class="st"><use href="#tbolt"/></svg><svg><use href="#steady"/></svg><b>稳态热 (A5)</b></div>
                <ul>
                  <li><div class="row"><i class="tg"></i><svg class="st"><use href="#tick"/></svg><svg><use href="#init"/></svg>初始温度</div></li>
                  <li><div class="row"><i class="tg"></i><svg class="st"><use href="#tick"/></svg><svg><use href="#settings"/></svg>分析设置</div></li>
                  <li><div class="row"><i class="tg"></i><svg class="st"><use href="#tick"/></svg><svg><use href="#temp"/></svg>温度</div></li>
                  <li><div class="row"><i class="tg"></i><svg class="st"><use href="#tick"/></svg><svg><use href="#temp"/></svg>温度 2</div></li>
                  <li><div class="row"><i class="tg minus"></i><svg class="st"><use href="#tbolt"/></svg><svg><use href="#model"/></svg><b>求解 (A6)</b></div>
                    <ul><li><div class="row"><i class="tg"></i><svg class="st"><use href="#tbolt"/></svg><svg><use href="#solinfo"/></svg>求解方案信息</div></li></ul>
                  </li>
                </ul>
              </li>
            </ul>
          </li>
        </ul>
      </div>
    </section>
    <section class="details">
      <header class="phead blue"><h3>"温度"的详细信息</h3><i class="dots"></i><svg><use href="#caret"/></svg><svg><use href="#pin"/></svg><svg><use href="#max"/></svg><svg><use href="#close"/></svg></header>
      <table class="props">
        <colgroup><col class="c0"><col class="c1"><col></colgroup>
        <tr><td class="g"><i class="box"></i></td><th colspan="2" class="cat">范围</th></tr>
        <tr><td class="g"></td><th>范围限定方法</th><td>几何结构选择</td></tr>
        <tr><td class="g"></td><th>几何结构</th><td>1 面</td></tr>
        <tr><td class="g"><i class="box"></i></td><th colspan="2" class="cat">定义</th></tr>
        <tr><td class="g"></td><th>ID（Beta）</th><td class="ro">37</td></tr>
        <tr><td class="g"></td><th>类型</th><td class="ro">温度</td></tr>
        <tr><td class="g"></td><th class="sel"><label><input type="checkbox">大小</label></th><td><div class="val">100. °C （斜坡）<button aria-label="更多选项"><svg class="i4"><use href="#arrow"/></svg></button></div></td></tr>
        <tr><td class="g"></td><th>抑制的</th><td>否</td></tr>
      </table>
    </section>
  </aside>

  <section class="center">
    <div class="toolbar">
      <i class="grip"></i>
      <button aria-label="放大"><svg><use href="#zoomin"/></svg></button><button aria-label="缩小"><svg><use href="#zoomout"/></svg></button><i class="gap"></i>
      <button class="on" aria-label="着色"><svg><use href="#cube"/></svg></button><button aria-label="线框"><svg><use href="#cubeflat"/></svg></button><button aria-label="显示"><svg><use href="#cubes"/></svg></button><i class="sep"></i>
      <button aria-label="复制视图"><svg><use href="#clip2"/></svg></button><button aria-label="粘贴视图"><svg><use href="#clipgray"/></svg></button><i class="sep"></i>
      <button aria-label="旋转"><svg><use href="#rotate"/></svg></button><svg class="i4 dd"><use href="#caret"/></svg>
      <button aria-label="平移"><svg><use href="#pan"/></svg></button><button aria-label="缩放"><svg><use href="#zoomin"/></svg></button><button aria-label="框缩放"><svg><use href="#zoomin"/></svg></button><button aria-label="适合"><svg><use href="#zoomblue"/></svg></button><button aria-label="缩放选择"><svg><use href="#zoomgreen"/></svg></button><button aria-label="放大镜"><svg><use href="#zoomin"/></svg></button><i class="sep"></i>
      <span>选择</span>
      <button class="txt"><svg><use href="#mode"/></svg>模式<svg class="i4"><use href="#caret"/></svg></button>
      <button class="on" aria-label="智能选择"><svg><use href="#selmode"/></svg></button><button aria-label="顶点"><svg><use href="#wire"/></svg></button><button aria-label="边"><svg><use href="#wire"/></svg></button><button aria-label="面"><svg><use href="#wiretop"/></svg></button><button aria-label="体"><svg><use href="#solid"/></svg></button><button aria-label="节点"><svg><use href="#bluebox"/></svg></button><button aria-label="单元面"><svg><use href="#greenblue"/></svg></button><button aria-label="单元"><svg><use href="#elem"/></svg></button><button aria-label="拾取"><svg><use href="#cursors"/></svg></button><button aria-label="标记"><svg><use href="#label"/></svg></button><button aria-label="坐标"><svg><use href="#printgray"/></svg></button><i class="sep"></i>
      <button class="txt"><svg><use href="#clipboard"/></svg>剪贴板<svg class="i4"><use href="#caret"/></svg></button>
      <span class="empty"><span>[</span><span>空</span><span>]</span></span><i class="sep"></i>
      <button class="txt tight"><svg><use href="#extend"/></svg>扩展<svg class="i4"><use href="#caret"/></svg></button>
      <button class="txt tight"><svg><use href="#pinloc"/></svg>选择依据<svg class="i4"><use href="#caret"/></svg></button>
      <button class="txt tight"><svg><use href="#convert"/></svg>转换<svg class="i4"><use href="#caret"/></svg></button>
      <svg class="i4 low"><use href="#caret"/></svg>
    </div>

    <div class="viewport">
      <svg class="scene" viewBox="0 0 707 258" preserveAspectRatio="xMidYMid meet">
        <defs>
          <linearGradient id="edgeg" x1="0" y1="0" x2="1" y2="0"><stop offset="0" stop-color="#9a9a9a"/><stop offset=".15" stop-color="#d4d4d4"/><stop offset="1" stop-color="#b9b9b9"/></linearGradient>
          <radialGradient id="ball" cx=".35" cy=".35"><stop offset="0" stop-color="#5ff"/><stop offset="1" stop-color="#066"/></radialGradient>
        </defs>
        <path d="M285 50q6 1 9 6l150 133q4 3 3 8l-158-137z" fill="url(#edgeg)"/>
        <path d="M260 59q13-9 23-9 7 1 9 10L261 84z" fill="#555" stroke="#bbb" stroke-width=".8"/>
        <path d="M260.500 84.500L291.500 61 447 196.500 416.500 219.500z" fill="#6b1515" stroke="#d0bcbc" stroke-width=".6"/>
        <path d="M288 87h9l1 5-1 5h-9z" fill="#ff3434" stroke="#8a0c0c"/>
        <path d="M326.500 112.500h6M329.500 109.500v6" stroke="#7474c9" stroke-width=".8"/>
        <rect x="238.500" y="233.500" width="231" height="4" fill="#fff" stroke="#777"/>
        <path d="M238 233h58v5h-58zM354 233h57v5h-57z" fill="#000"/>
        <g class="ticks" text-anchor="middle"><text x="238" y="231">0.000</text><text x="353" y="231">0.020</text><text x="473" y="231">0.040 (m)</text><text x="295" y="245">0.010</text><text x="411" y="245">0.030</text></g>
        <path d="M659 210L640 194" stroke="#00009e" stroke-width="2"/><path d="M633 188l9 3-5 6z" fill="#1010b8"/>
        <path d="M659 210l20-14" stroke="#064d0b" stroke-width="2"/><path d="M686 190l-5 8-5-6z" fill="#087a12"/>
        <path d="M659 210v15" stroke="#c40000" stroke-width="2"/><path d="M655 225q4-3 8 0l-4 7z" fill="#c40000"/>
        <circle cx="660" cy="200" r="3.700" fill="url(#ball)"/>
        <text x="628" y="185" fill="#3434df" class="ax">Z</text><text x="690" y="186" fill="#2da33b" class="ax">Y</text><text x="660" y="236" fill="#f04444" class="ax" text-anchor="middle">X</text>
      </svg>
      <div class="legend"><b>A: 稳态热</b><span>温度</span><span>时间: 1. s</span><span>2022/12/9 11:16</span><span class="key"><i></i>温度: 100. °C</span></div>
      <div class="brand"><div class="name"><svg viewBox="0 0 16 16"><path d="M0 16L6 0h4l6 16h-4L8.500 6 4.500 16z" fill="#fff"/></svg><span>nsys</span></div><div class="ver">2022 R2</div></div>
    </div>

    <div class="bottom">
      <section class="annot">
        <header class="phead"><h3>图形注解</h3><i class="dots"></i><svg><use href="#caret"/></svg><svg><use href="#pin"/></svg><svg><use href="#max"/></svg><svg><use href="#close"/></svg></header>
        <div class="gray">
          <table class="cols"><tr><th class="w56">类型</th><th class="w56">值</th><th class="w84">注意</th><th class="w28">单位</th><th class="w56">位置X</th><th class="w56">位置Y</th><th>位置</th></tr></table>
        </div>
        <div class="hscroll"><svg class="i5 left"><use href="#arrow"/></svg><i class="thumb"></i><svg class="i5 right"><use href="#arrow"/></svg></div>
        <div class="ptabs"><button>图形</button><button class="sel">图形注解</button></div>
      </section>
      <section class="data">
        <header class="phead"><h3>表格数据</h3><i class="dots"></i><svg><use href="#caret"/></svg><svg><use href="#pin"/></svg><svg><use href="#max"/></svg><svg><use href="#close"/></svg></header>
        <div class="gray">
          <table class="grid">
            <tr><th class="n"></th><th class="s">步数</th><th class="t">时间 [s]</th><th class="v"><label><input type="checkbox" checked>温度 [°C]</label></th></tr>
            <tr><th>1</th><td class="f">1</td><td>0.</td><td>= 22.</td></tr>
            <tr><th>2</th><td class="f">1</td><td>1.</td><td>100.</td></tr>
            <tr><th>*</th><td class="f"></td><td></td><td></td></tr>
          </table>
        </div>
      </section>
    </div>
  </section>
</main>

<footer class="status"><span>消息窗格</span><span>无选择</span><span class="metric"><svg class="i4"><use href="#caret"/></svg>度量标准 (m, kg, N, s, V, A)</span><span>度</span><span>rad/s</span><span>摄氏度</span></footer>
<nav class="taskbar">
  <div class="apps">
    <button aria-label="开始"><svg><use href="#win"/></svg></button><button aria-label="搜索"><svg><use href="#tsearch"/></svg></button><button aria-label="文件管理器"><svg><use href="#folder"/></svg></button><button class="run" aria-label="浏览器"><svg><use href="#edge"/></svg></button><button aria-label="MATLAB"><svg><use href="#matlab"/></svg></button><button aria-label="应用"><svg><use href="#store"/></svg></button><button class="run" aria-label="Word"><svg><use href="#word"/></svg></button><button class="run" aria-label="音乐"><svg><use href="#music"/></svg></button><button class="run" aria-label="Workbench"><svg><use href="#wb"/></svg></button><button class="run active" aria-label="Mechanical"><svg><use href="#gears"/></svg></button>
  </div>
  <div class="tray">
    <svg><use href="#music"/></svg><svg><use href="#bing"/></svg><svg><use href="#cloud"/></svg><svg><use href="#onenote"/></svg><svg><use href="#sound"/></svg><svg><use href="#qq"/></svg><svg><use href="#net"/></svg><svg><use href="#drive"/></svg><svg><use href="#shield"/></svg><span class="ime">英</span><time>11:16</time><svg class="i10"><use href="#notif"/></svg>
  </div>
</nav>
<div class="watermark">CSDN @云雾飘渺山仍在</div>
</body>
</html>
```
FILE: styles.css
```css
* { box-sizing: border-box; }
body { margin: 0; height: 100vh; display: flex; flex-direction: column; overflow: hidden; position: relative; background: #eeeef2; color: #333; font: 6px/9px "Noto Sans", "Noto Sans CJK SC", sans-serif; }
button, input, select { font: inherit; color: inherit; margin: 0; padding: 0; border: 0; background: none; border-radius: 0; }
input[type=text], select { min-width: 0; border: 1px solid #d3d3dc; background: #fff; padding: 0 2px; }
select { appearance: none; width: 100%; height: 100%; }
input::placeholder { color: #999; opacity: 1; }
input[type=checkbox] { appearance: none; width: 7px; height: 7px; border: 1px solid #aaa; background: #fff; flex: none; display: flex; align-items: center; justify-content: center; }
input[type=checkbox]:checked::before { content: ""; width: 3px; height: 5px; border: solid #222; border-width: 0 1px 1px 0; transform: rotate(40deg); }
h1, h2, h3, ul { margin: 0; padding: 0; font: inherit; list-style: none; }
svg { display: block; flex: none; }
table { border-collapse: collapse; }
th { font-weight: 400; text-align: left; }
.defs { position: absolute; width: 0; height: 0; }
.i4 { width: 4px; height: 4px; }
.i5 { width: 5px; height: 5px; }
.i7 { width: 7px; height: 7px; }
.i8 { width: 8px; height: 8px; }
.i9 { width: 9px; height: 9px; }
.i10 { width: 10px; height: 10px; }
.i16 { width: 16px; height: 16px; }
.i17 { width: 17px; height: 17px; }
.film { width: 18px; height: 16px; }
.low { align-self: flex-end; margin-bottom: 3px; }

/* Title bar */
.titlebar { height: 15px; display: flex; align-items: center; flex: none; }
.quick { width: 65px; display: flex; align-items: center; gap: 5px; padding-left: 4px; flex: none; }
.quick button:nth-of-type(1) { border-left: 1px solid #ddd; padding-left: 2px; }
.context { width: 28px; height: 15px; flex: none; border-top: 2px solid #2e5ea8; background: #d5e1f3; color: #3c6cb5; text-align: center; line-height: 14px; }
.titlebar h1 { flex: 1; text-align: center; color: #444; }
.winbtns { width: 93px; display: flex; justify-content: flex-end; gap: 12px; padding-right: 6px; color: #222; }

/* Tabs */
.tabs { height: 15px; display: flex; flex: none; border-bottom: 1px solid #e1e1e5; }
.tab { width: 28px; height: 15px; flex: none; }
.tab.file { width: 32px; background: #0072c6; color: #fff; }
.tab.current { width: 28px; margin: 0 1px 0 4px; background: #fbfbfb; border: 1px solid #ddd; border-bottom: 0; }
.tab.ctx { background: #f4f4f8; }
.tab.wide { width: 36px; }
.launchbox { margin-left: auto; display: flex; align-items: center; gap: 4px; padding-right: 3px; }
.launchbox input { width: 90px; height: 12px; }
.helpbtn { display: flex; align-items: center; }

/* Ribbon */
.ribbon { height: 51px; flex: none; display: flex; background: #fbfbfb; border-bottom: 1px solid #dedee2; padding-top: 3px; }
.group { position: relative; flex: none; height: 44px; border-right: 1px solid #dcdcdc; display: flex; flex-direction: column; }
.group h2 { text-align: center; margin-top: auto; line-height: 7px; }
.tools { display: flex; height: 36px; padding-left: 6px; gap: 4px; }
.big { display: flex; flex-direction: column; align-items: center; flex: none; min-width: 19px; padding-top: 1px; }
.big .i4 { margin-top: 3px; }
.units { width: 16px; height: 16px; background: #e4ae36; display: flex; flex-direction: column; align-items: center; color: #333; line-height: 8px; white-space: nowrap; }
.units svg { width: 14px; height: 6px; margin-top: 1px; }
.cmds { display: flex; flex-direction: column; flex: none; }
.cmds button { display: flex; align-items: center; height: 12px; gap: 1px; white-space: nowrap; }
.cmds button svg:first-child { width: 8px; height: 8px; }
.off { color: #aaa; }
.g-outline { width: 122px; }
.g-solve { width: 125px; }
.g-insert { width: 185px; }
.g-tools { width: 266px; }
.g-layout { width: 113px; }
.g-insert .cmds + .cmds, .g-tools .cmds + .cmds { margin-left: 1px; }
.g-solve .tools { padding-left: 3px; }
.form { width: 67px; display: flex; flex-direction: column; }
.selwrap { position: relative; display: block; height: 11px; }
.selwrap svg { position: absolute; right: 3px; top: 4px; }
.form .selwrap { margin-top: 1px; }
.chk { display: flex; align-items: center; gap: 4px; height: 12px; padding-left: 2px; }
.cores { display: flex; align-items: center; gap: 2px; }
.cores input { width: 36px; height: 12px; }
.launcher { position: absolute; right: 2px; bottom: 0; width: 6px; height: 6px; }

/* Work area */
.work { flex: 1; min-height: 0; display: flex; gap: 2px; }
.side { width: 156px; flex: none; display: flex; flex-direction: column; background: #fff; }
.outline { flex: 60 1 0; display: flex; flex-direction: column; min-height: 0; }
.details { flex: 40 1 0; min-height: 0; }
.phead { height: 12px; display: flex; align-items: center; gap: 3px; padding: 0 4px 0 3px; background: #eeeef2; color: #333; flex: none; }
.phead svg { width: 6px; height: 6px; }
.phead h3 { color: #555; }
.phead.blue { height: 13px; }
.phead.blue, .phead.blue h3 { background: #007acc; color: #fff; }
.dots { flex: 1; height: 3px; background: radial-gradient(circle, #cfcfd6 40%, transparent 50%) 0 0/3px 3px; }
.blue .dots { opacity: .2; }
.grip { width: 4px; height: 11px; flex: none; background: radial-gradient(circle, #c5c5cf 40%, transparent 50%) 0 0/2px 3px; }
.filter { height: 15px; display: flex; align-items: center; gap: 3px; padding-left: 5px; background: #eeeef2; flex: none; }
.filter .selwrap { width: 56px; height: 12px; }
.filter input { width: 50px; height: 12px; }
.tree { font-size: 7px; padding-top: 1px; color: #222; }
.tree ul ul { padding-left: 15px; }
.tree li { position: relative; }
.tree li::before { content: ""; position: absolute; left: 7px; top: 0; height: 100%; border-left: 1px dotted #aaa; }
.tree li:last-child::before { height: 5px; }
.row { display: flex; align-items: center; height: 9px; white-space: nowrap; }
.row svg { width: 8px; height: 8px; margin-right: 3px; }
.row .st { width: 5px; height: 8px; margin: 0; flex: none; }
.row.root { padding-left: 5px; }
.tg { position: relative; width: 15px; height: 9px; flex: none; background: linear-gradient(90deg, #bbb 50%, transparent 50%) 0 4px/2px 1px repeat-x; background-clip: content-box; padding-left: 8px; }
.plus::before, .minus::before { content: ""; position: absolute; left: 5px; top: 2px; width: 5px; height: 5px; border: 1px solid #aaa; background: linear-gradient(#444, #444) center/3px 1px no-repeat, #fff; }
.plus::before { background: linear-gradient(#444, #444) center/3px 1px no-repeat, linear-gradient(#444, #444) center/1px 3px no-repeat, #fff; }

/* Property grid */
.props { width: 100%; table-layout: fixed; }
.c0 { width: 8px; }
.c1 { width: 42px; }
.props tr { height: 12px; }
.props th, .props td { padding: 0 2px; height: 12px; border: 1px solid #c4c4c4; white-space: nowrap; color: #222; }
.props .g { border-color: transparent #c4c4c4 transparent transparent; padding: 0; background: #f3f3f6; }
.props .cat { font-weight: 700; }
.props .ro { background: #e8e6e2; }
.props .sel { background: #0078d7; color: #fff; }
.sel label { display: flex; align-items: center; gap: 4px; }
.box { display: block; width: 5px; height: 5px; margin: 0 1px; border: 1px solid #999; background: linear-gradient(#444, #444) center/3px 1px no-repeat; }
.val { display: flex; justify-content: space-between; align-items: center; height: 11px; }
.val button { width: 8px; height: 11px; background: #eee; border: 1px solid #bbb; display: flex; align-items: center; justify-content: center; }
.hscroll .left { transform: rotate(180deg); }

/* Graphics toolbar */
.center { flex: 1; min-width: 0; display: flex; flex-direction: column; }
.toolbar { height: 16px; flex: none; display: flex; align-items: center; padding-left: 5px; white-space: nowrap; border-bottom: 1px solid #fafafa; overflow: hidden; }
.toolbar .grip { margin-right: 4px; }
.toolbar button { min-width: 12px; height: 12px; display: flex; align-items: center; justify-content: center; flex: none; }
.toolbar button svg:first-child { width: 9px; height: 9px; }
.toolbar .on { border: 1px solid #79b8e8; background: #dcecf8; width: 13px; height: 13px; }
.toolbar .txt { gap: 2px; margin: 0 4px; }
.toolbar .tight { margin: 0 3px; }
.gap { width: 3px; }
.sep { width: 1px; height: 11px; background: #d5d5da; margin: 0 2px; flex: none; }
.dd { margin: 0 2px; }
.empty { display: flex; gap: 3px; margin: 0 2px; }

/* Viewport */
.viewport { position: relative; flex: 1; min-height: 0; background: linear-gradient(#6b8bdd, #fff 96%); }
.scene { width: 100%; height: 100%; }
.ticks { font: 6px "Liberation Sans", sans-serif; fill: #111; }
.ax { font: 7px "Liberation Sans", sans-serif; }
.legend { position: absolute; left: 9px; top: 8px; display: flex; flex-direction: column; color: #0b1230; }
.key { display: flex; align-items: center; gap: 3px; margin-top: 9px; }
.key i { width: 9px; height: 9px; background: #ff3434; border: 1px solid #7b2a50; }
.brand { position: absolute; right: 5px; top: 8px; color: #fff; text-align: right; font-weight: 700; }
.name { display: flex; align-items: flex-end; font-size: 20px; line-height: 23px; }
.name svg { width: 17px; height: 16px; margin-bottom: 4px; }
.ver { font-size: 10px; line-height: 12px; }

/* Bottom panels */
.bottom { height: 104px; flex: none; display: flex; gap: 2px; }
.annot { width: 352px; flex: none; display: flex; flex-direction: column; }
.data { flex: 1; min-width: 0; display: flex; flex-direction: column; }
.gray { flex: 1; background: #a0a0a0; overflow: hidden; }
.cols { width: 100%; table-layout: fixed; background: #f0f0f0; height: 11px; }
.cols th { padding: 0 2px; border-right: 1px solid #999; overflow: hidden; white-space: nowrap; color: #222; }
.cols th:last-child { padding-right: 0; border-right: 0; }
.w28 { width: 28px; }
.w56 { width: 56px; }
.w84 { width: 84px; }
.hscroll { height: 10px; display: flex; align-items: center; background: #f0f0f0; padding: 0 2px; gap: 2px; flex: none; }
.thumb { width: 130px; height: 9px; background: #cdcdcd; }
.right { margin-left: auto; }
.ptabs { height: 12px; flex: none; display: flex; }
.ptabs button { padding: 0 3px; color: #555; }
.ptabs .sel { background: #fff; color: #0078cc; border: 1px solid #ddd; border-top: 0; }
.grid { background: #fff; color: #222; }
.grid th, .grid td { height: 10px; padding: 0 2px; border: 1px solid #c4c4c4; line-height: 8px; white-space: nowrap; }
.grid th, .grid .f { background: #f0f0f0; }
.n { width: 8px; }
.s { width: 17px; }
.t { width: 27px; }
.grid .v { width: 40px; color: #d22; }
.v label { display: flex; align-items: center; gap: 3px; }

/* Status and task bars */
.status { height: 12px; flex: none; display: flex; align-items: center; justify-content: flex-end; gap: 12px; padding-right: 4px; background: #007acc; color: #fff; white-space: nowrap; }
.metric { display: flex; align-items: center; gap: 2px; min-width: 110px; }
.taskbar { height: 17px; flex: none; display: flex; justify-content: space-between; background: #1f211b; color: #fff; }
.apps { display: flex; }
.apps button { width: 20px; display: flex; align-items: center; justify-content: center; margin-right: 1px; border-bottom: 1px solid transparent; }
.apps svg { width: 10px; height: 10px; }
.apps .run { width: 17px; margin: 0 2px; border-color: #f3c17c; }
.apps .active { width: 20px; margin: 0; background: #4a4b47; }
.tray { display: flex; align-items: center; gap: 5px; padding-right: 13px; }
.tray svg { width: 9px; height: 9px; }
.tray svg.i10 { width: 10px; height: 10px; margin-left: 5px; }
.tray time { font-size: 7px; }
.ime { font-size: 8px; }
.watermark { position: absolute; right: 15px; bottom: 7px; color: rgba(235, 235, 235, .88); font: 300 19px/24px "Liberation Sans", "Noto Sans CJK SC", sans-serif; white-space: nowrap; pointer-events: none; text-shadow: 0 0 1px rgba(0, 0, 0, .6); }
```
